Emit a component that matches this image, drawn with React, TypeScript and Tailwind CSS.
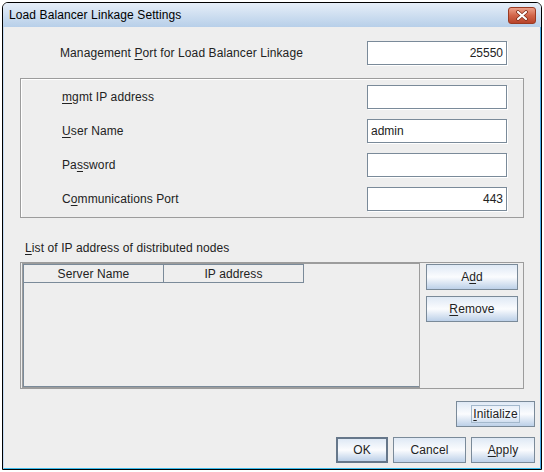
import React from "react";

function Mn({ children }: { children: React.ReactNode }) {
  return <span className="underline underline-offset-[2px]">{children}</span>;
}

function Field({ value = "", right = false }: { value?: string; right?: boolean }) {
  return (
    <div
      className={`w-[140px] h-[24px] bg-white border border-[#7a8a99] shadow-[1px_1px_0_#ffffff] flex items-center px-[3px] text-[12px] text-[#222] ${
        right ? "justify-end" : "justify-start"
      }`}
    >
      {value}
    </div>
  );
}

function Btn({
  children,
  className = "",
  def = false,
  focus = false,
}: {
  children: React.ReactNode;
  className?: string;
  def?: boolean;
  focus?: boolean;
}) {
  return (
    <div
      className={`h-[26px] flex items-center justify-center text-[12px] text-[#222] tracking-[0.1px] bg-linear-to-b from-[#dfe9f5] via-[#fbfcfe] to-[#bcd0e8] ${
        def ? "border-2 border-[#66778a]" : "border border-[#7a8a99]"
      } ${className}`}
    >
      {focus ? (
        <span className="border border-[#a3b8cc] px-[1px] leading-[16px]">{children}</span>
      ) : (
        children
      )}
    </div>
  );
}

function Row({ label, children }: { label: React.ReactNode; children: React.ReactNode }) {
  return (
    <div className="flex items-center h-[24px]">
      <div className="flex-1 text-[12px] text-[#222] tracking-[0.1px]">{label}</div>
      {children}
    </div>
  );
}

export default function App() {
  return (
    <div className="w-[544px] h-[472px] bg-white font-['Liberation_Sans',Arial,sans-serif] overflow-hidden">
      <div className="ml-[2px] mt-[2px] w-[540px] h-[468px] border border-black rounded-t-[6px] flex flex-col overflow-hidden">
        {/* title bar */}
        <div className="h-[24px] shrink-0 bg-linear-to-b from-[#e6eef8] to-[#b7cfe9] flex items-center justify-between pl-[6px] pr-[5px]">
          <span className="text-[12px] text-black tracking-[0.1px]">Load Balancer Linkage Settings</span>
          <div className="w-[28px] h-[17px] rounded-[3px] border border-[#9a3a22] bg-linear-to-b from-[#eba08a] via-[#d2654a] to-[#b8432a] flex items-center justify-center">
            <svg width="14" height="11" viewBox="0 0 14 11">
              <path d="M3 2 L11 9 M11 2 L3 9" stroke="#7a2a18" strokeWidth="3.6" strokeLinecap="round" />
              <path d="M3 2 L11 9 M11 2 L3 9" stroke="#ffffff" strokeWidth="2.2" strokeLinecap="round" />
            </svg>
          </div>
        </div>

        {/* body */}
        <div className="flex-1 bg-[#eeeeee] border-l border-l-[#c4dbf4] border-r border-r-[#4aa8e4] border-b border-b-[#3cbcec] flex flex-col pl-[16px] pr-[16px]">
          <div className="mt-[14px] pl-[40px] pr-[17px]">
            <Row
              label={
                <>
                  Management <Mn>P</Mn>ort for Load Balancer Linkage
                </>
              }
            >
              <Field value="25550" right />
            </Row>
          </div>

          <div className="mt-[13px] h-[140px] border border-[#9c9c9c] shadow-[inset_1px_1px_0_#ffffff] pl-[41px] pr-[16px] pt-[6px] flex flex-col gap-[10px]">
            <Row
              label={
                <>
                  <Mn>m</Mn>gmt IP address
                </>
              }
            >
              <Field />
            </Row>
            <Row
              label={
                <>
                  <Mn>U</Mn>ser Name
                </>
              }
            >
              <Field value="admin" />
            </Row>
            <Row
              label={
                <>
                  Pa<Mn>s</Mn>sword
                </>
              }
            >
              <Field />
            </Row>
            <Row
              label={
                <>
                  C<Mn>o</Mn>mmunications Port
                </>
              }
            >
              <Field value="443" right />
            </Row>
          </div>

          <div className="mt-[23px] mb-[7px] h-[14px] leading-[14px] pl-[5px] text-[12px] text-[#222] tracking-[0.1px]">
            <Mn>L</Mn>ist of IP address of distributed nodes
          </div>

          <div className="h-[127px] border border-[#9c9c9c] flex pl-[1px] pr-[4px]">
            <div className="w-[398px] h-full border border-[#9c9c9c] flex flex-col">
              <div className="flex h-[19px] border-l border-[#7a8a99]">
                <div className="w-[140px] h-full border-t border-b border-r border-[#7a8a99] flex items-center justify-center text-[12px] text-[#222] tracking-[0.1px]">
                  Server Name
                </div>
                <div className="w-[140px] h-full border-t border-b border-r border-[#7a8a99] flex items-center justify-center text-[12px] text-[#222] tracking-[0.1px]">
                  IP address
                </div>
              </div>
              <div className="flex-1 border-l border-b border-[#7a8a99]" />
            </div>
            <div className="ml-[6px] pt-[1px] flex flex-col gap-[6px]">
              <Btn className="w-[92px]">
                A<Mn>d</Mn>d
              </Btn>
              <Btn className="w-[92px]">
                <Mn>R</Mn>emove
              </Btn>
            </div>
          </div>

          <div className="mt-[12px] flex justify-end -mr-[11px]">
            <Btn className="w-[79px]" focus>
              <Mn>I</Mn>nitialize
            </Btn>
          </div>

          <div className="mt-[10px] flex justify-end gap-[5px] -mr-[11px]">
            <Btn className="w-[52px]" def>
              OK
            </Btn>
            <Btn className="w-[73px]">Cancel</Btn>
            <Btn className="w-[64px]">
              <Mn>A</Mn>pply
            </Btn>
          </div>
        </div>
      </div>
    </div>
  );
}
